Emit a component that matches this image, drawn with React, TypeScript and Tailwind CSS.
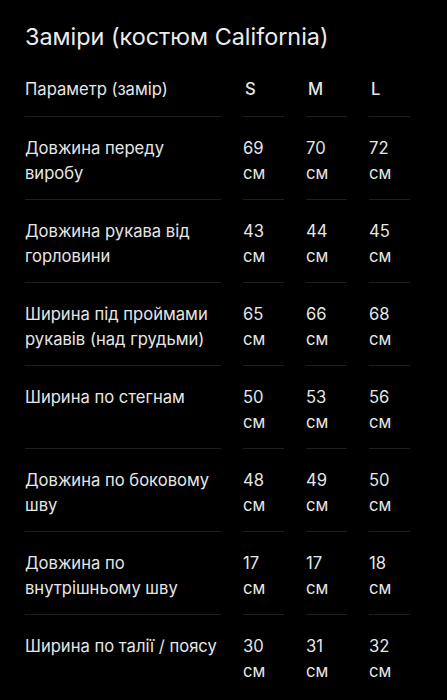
const sizes = ['S', 'M', 'L'];

const rows: { label: string; values: number[] }[] = [
  { label: 'Довжина переду виробу', values: [69, 70, 72] },
  { label: 'Довжина рукава від горловини', values: [43, 44, 45] },
  { label: 'Ширина під проймами рукавів (над грудьми)', values: [65, 66, 68] },
  { label: 'Ширина по стегнам', values: [50, 53, 56] },
  { label: 'Довжина по боковому шву', values: [48, 49, 50] },
  { label: 'Довжина по внутрішньому шву', values: [17, 17, 18] },
  { label: 'Ширина по талії / поясу', values: [30, 31, 32] },
];

export default function App() {
  return (
    <div
      className="min-h-[700px] w-full bg-black pl-[25px] pt-[22px] text-[#e6e6e6]"
      style={{ fontFamily: 'Inter, "Noto Sans", sans-serif' }}
    >
      <h1 className="text-[23.4px] leading-[30px] font-normal text-[#ececec]">
        Заміри (костюм California)
      </h1>

      <div className="mt-[25px] grid grid-cols-[196px_41px_41px_41px] gap-x-[22px] text-[16.6px] leading-[25px]">
        {/* header */}
        <div className="border-b border-[#1e1e1e] pb-[14px]">Параметр (замір)</div>
        {sizes.map((s) => (
          <div key={s} className="border-b border-[#1e1e1e] pb-[14px] pl-[2px] font-medium">
            {s}
          </div>
        ))}

        {rows.map((row, i) => {
          const last = i === rows.length - 1;
          const cell = last ? 'pt-[19px] pb-[13px]' : 'border-b border-[#1e1e1e] pt-[19px] pb-[13px]';
          return [
            <div key={`${row.label}-l`} className={cell}>
              {row.label}
            </div>,
            ...row.values.map((v, j) => (
              <div key={`${row.label}-${j}`} className={cell}>
                {v}
                <br />
                см
              </div>
            )),
          ];
        })}
      </div>
    </div>
  );
}
